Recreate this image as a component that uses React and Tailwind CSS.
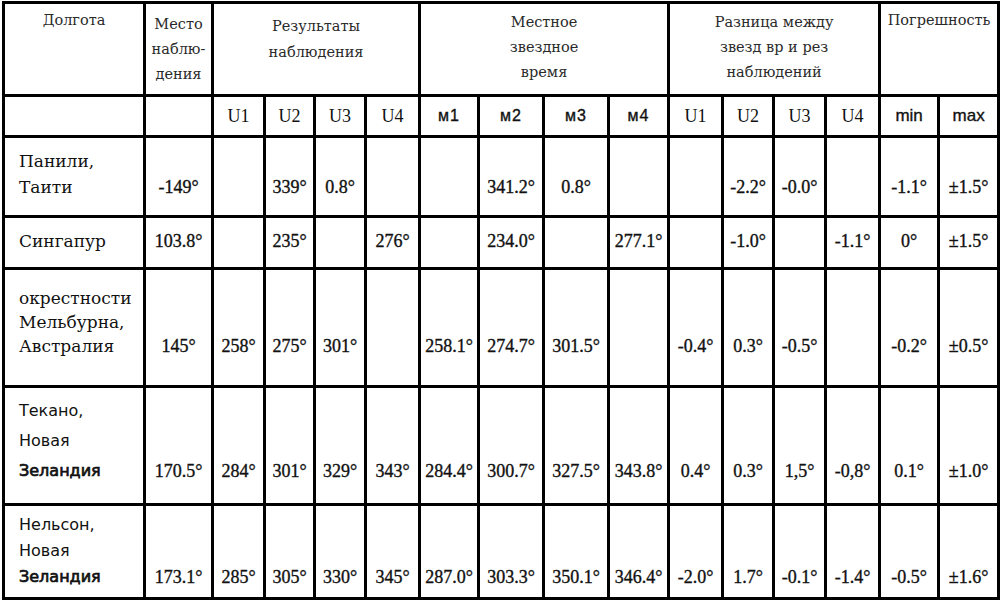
import React from "react";

const rows = [
  {
    name: ["Панили,", "Таити"],
    h: "h-[80px]",
    pb: "pb-[15px]",
    lh: "leading-[26px]",
    sans: false,
    vals: ["-149°", "", "339°", "0.8°", "", "", "341.2°", "0.8°", "", "", "-2.2°", "-0.0°", "", "-1.1°", "±1.5°"],
  },
  {
    name: ["Сингапур"],
    h: "h-[52px]",
    pb: "pb-[13px]",
    lh: "leading-[26px]",
    sans: false,
    vals: ["103.8°", "", "235°", "", "276°", "", "234.0°", "", "277.1°", "", "-1.0°", "", "-1.1°", "0°", "±1.5°"],
  },
  {
    name: ["окрестности", "Мельбурна,", "Австралия"],
    h: "h-[118px]",
    pb: "pb-[27px]",
    lh: "leading-[24px]",
    sans: false,
    vals: ["145°", "258°", "275°", "301°", "", "258.1°", "274.7°", "301.5°", "", "-0.4°", "0.3°", "-0.5°", "", "-0.2°", "±0.5°"],
  },
  {
    name: ["Текано,", "Новая", "Зеландия"],
    h: "h-[118px]",
    pb: "pb-[17px]",
    lh: "leading-[30px]",
    sans: true,
    vals: ["170.5°", "284°", "301°", "329°", "343°", "284.4°", "300.7°", "327.5°", "343.8°", "0.4°", "0.3°", "1,5°", "-0,8°", "0.1°", "±1.0°"],
  },
  {
    name: ["Нельсон,", "Новая", "Зеландия"],
    h: "h-[94px]",
    pb: "pb-[7px]",
    lh: "leading-[26px]",
    sans: true,
    vals: ["173.1°", "285°", "305°", "330°", "345°", "287.0°", "303.3°", "350.1°", "346.4°", "-2.0°", "1.7°", "-0.1°", "-1.4°", "-0.5°", "±1.6°"],
  },
];

const cell = "border-[3px] border-black";
const hdr = "font-['DejaVu_Serif',serif] text-[14.5px] leading-[25px] text-[#2a2a2a] align-top text-center";
const stroke = "[-webkit-text-stroke:0.35px_#111]";

export default function App() {
  return (
    <div className="w-[1000px] h-[600px] bg-white overflow-hidden pt-[1px] pl-[2px]">
      <table className="table-fixed border-collapse w-[995px] text-[#111]">
        <colgroup>
          <col className="w-[141px]" />
          <col className="w-[68px]" />
          <col className="w-[52px]" />
          <col className="w-[50px]" />
          <col className="w-[51px]" />
          <col className="w-[54px]" />
          <col className="w-[59px]" />
          <col className="w-[65px]" />
          <col className="w-[65px]" />
          <col className="w-[60px]" />
          <col className="w-[54px]" />
          <col className="w-[51px]" />
          <col className="w-[52px]" />
          <col className="w-[54px]" />
          <col className="w-[59px]" />
          <col className="w-[60px]" />
        </colgroup>
        <thead>
          <tr className="h-[93px]">
            <th className={`${cell} ${hdr} font-normal pt-[4px]`}>Долгота</th>
            <th className={`${cell} ${hdr} font-normal pt-[8px]`}>
              Место
              <br />
              наблю-
              <br />
              дения
            </th>
            <th colSpan={4} className={`${cell} ${hdr} font-normal pt-[9px] leading-[26px]`}>
              Результаты
              <br />
              наблюдения
            </th>
            <th colSpan={4} className={`${cell} ${hdr} font-normal pt-[6px]`}>
              Местное
              <br />
              звездное
              <br />
              время
            </th>
            <th colSpan={4} className={`${cell} ${hdr} font-normal pt-[6px]`}>
              Разница между
              <br />
              звезд вр и рез
              <br />
              наблюдений
            </th>
            <th colSpan={2} className={`${cell} ${hdr} font-normal pt-[4px]`}>Погрешность</th>
          </tr>
          <tr className="h-[41px]">
            <th className={cell}></th>
            <th className={cell}></th>
            {["U1", "U2", "U3", "U4"].map((t) => (
              <th key={"a" + t} className={`${cell} font-normal font-['Liberation_Serif',serif] text-[18px] text-center align-middle`}>
                {t}
              </th>
            ))}
            {["м1", "м2", "м3", "м4"].map((t) => (
              <th key={"b" + t} className={`${cell} font-normal font-['Liberation_Sans',sans-serif] text-[16px] tracking-[1px] text-center align-middle ${stroke}`}>
                {t}
              </th>
            ))}
            {["U1", "U2", "U3", "U4"].map((t) => (
              <th key={"c" + t} className={`${cell} font-normal font-['Liberation_Serif',serif] text-[18px] text-center align-middle`}>
                {t}
              </th>
            ))}
            <th className={`${cell} font-normal font-['Liberation_Sans',sans-serif] text-[17px] text-center align-middle ${stroke}`}>min</th>
            <th className={`${cell} font-normal font-['Liberation_Sans',sans-serif] text-[17px] text-center align-middle ${stroke}`}>max</th>
          </tr>
        </thead>
        <tbody>
          {rows.map((r, i) => (
            <tr key={i} className={r.h}>
              <td
                className={`${cell} ${r.pb} ${r.lh} pl-[14px] align-bottom text-left ${
                  r.sans ? "font-['DejaVu_Sans',sans-serif] text-[16px]" : "font-['DejaVu_Serif',serif] text-[17px]"
                }`}
              >
                {r.name.map((n, j) => (
                  <div
                    key={j}
                    className={r.sans && j === r.name.length - 1 ? "[-webkit-text-stroke:0.7px_#111]" : ""}
                  >
                    {n}
                  </div>
                ))}
              </td>
              {r.vals.map((v, j) => (
                <td
                  key={j}
                  className={`${cell} ${r.pb} ${r.lh} align-bottom text-center whitespace-nowrap font-['Liberation_Serif',serif] text-[18px] ${stroke}`}
                >
                  {v}
                </td>
              ))}
            </tr>
          ))}
        </tbody>
      </table>
    </div>
  );
}
